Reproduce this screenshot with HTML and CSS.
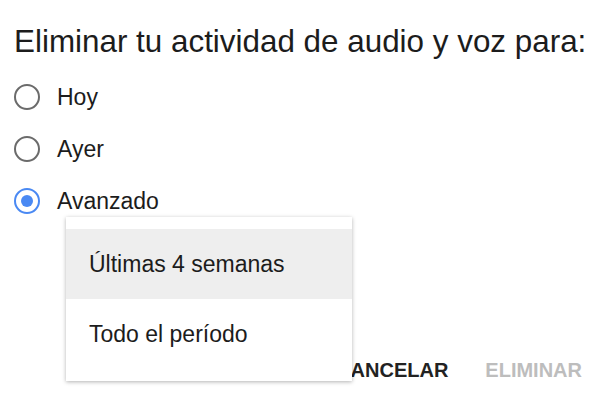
FILE: index.html
```html
<!DOCTYPE html>
<html lang="es">
<head>
    <meta charset="UTF-8">
    <title>Eliminar actividad</title>
    <link rel="stylesheet" href="styles.css">
</head>
<body>
<div class="dialog">
    <h1 class="title">Eliminar tu actividad de audio y voz para:</h1>

    <div class="options">
        <label class="option"><span class="radio"></span>Hoy</label>
        <label class="option"><span class="radio"></span>Ayer</label>
        <label class="option"><span class="radio checked"></span>Avanzado</label>
    </div>

    <div class="actions">
        <button type="button" class="btn">CANCELAR</button>
        <button type="button" class="btn" disabled>ELIMINAR</button>
    </div>

    <!-- desplegable abierto sobre el diálogo -->
    <ul class="menu">
        <li class="menu-item active">Últimas 4 semanas</li>
        <li class="menu-item">Todo el período</li>
    </ul>
</div>
</body>
</html>
```

FILE: styles.css
```css
body {
    margin: 0;
    background-color: white;
    font-family: "Liberation Sans", Arial, sans-serif;
    color: #1c1c1c;
}

.dialog {
    position: relative;
    width: 600px;
    height: 399px;
    padding: 24px 10px 0 14px;
    box-sizing: border-box;
}

.title {
    margin: 0;
    font-size: 31.4px;
    font-weight: normal;
    line-height: 36px;
    white-space: nowrap;
}

.options {
    margin-top: 11px;
}

.option {
    display: flex;
    align-items: center;
    height: 52px;
    font-size: 23px;
    gap: 17px;
}

.radio {
    width: 26px;
    height: 26px;
    border: 2px solid #6b6b6b;
    border-radius: 50%;
    box-sizing: border-box;
    display: flex;
    align-items: center;
    justify-content: center;
}

.radio.checked {
    border-color: #4a89f3;
}

.radio.checked::after {
    content: "";
    width: 12px;
    height: 12px;
    border-radius: 50%;
    background-color: #4a89f3;
}

.actions {
    display: flex;
    justify-content: flex-end;
    gap: 21px;
    margin-top: 125px;
}

.btn {
    font-family: inherit;
    font-size: 20px;
    font-weight: bold;
    line-height: 36px;
    padding: 0 8px;
    background: none;
    border: none;
    color: #222;
}

.btn:disabled {
    color: #bdbdbd;
}

.menu {
    position: absolute;
    left: 66px;
    top: 217px;
    width: 286px;
    margin: 0;
    padding: 12px 0;
    list-style: none;
    background-color: white;
    box-shadow: 0 1px 4px rgba(0,0,0,0.3);
}

.menu-item {
    height: 70px;
    line-height: 70px;
    padding-left: 23px;
    font-size: 23px;
}

.menu-item.active {
    background-color: #eeeeee;
}
```
